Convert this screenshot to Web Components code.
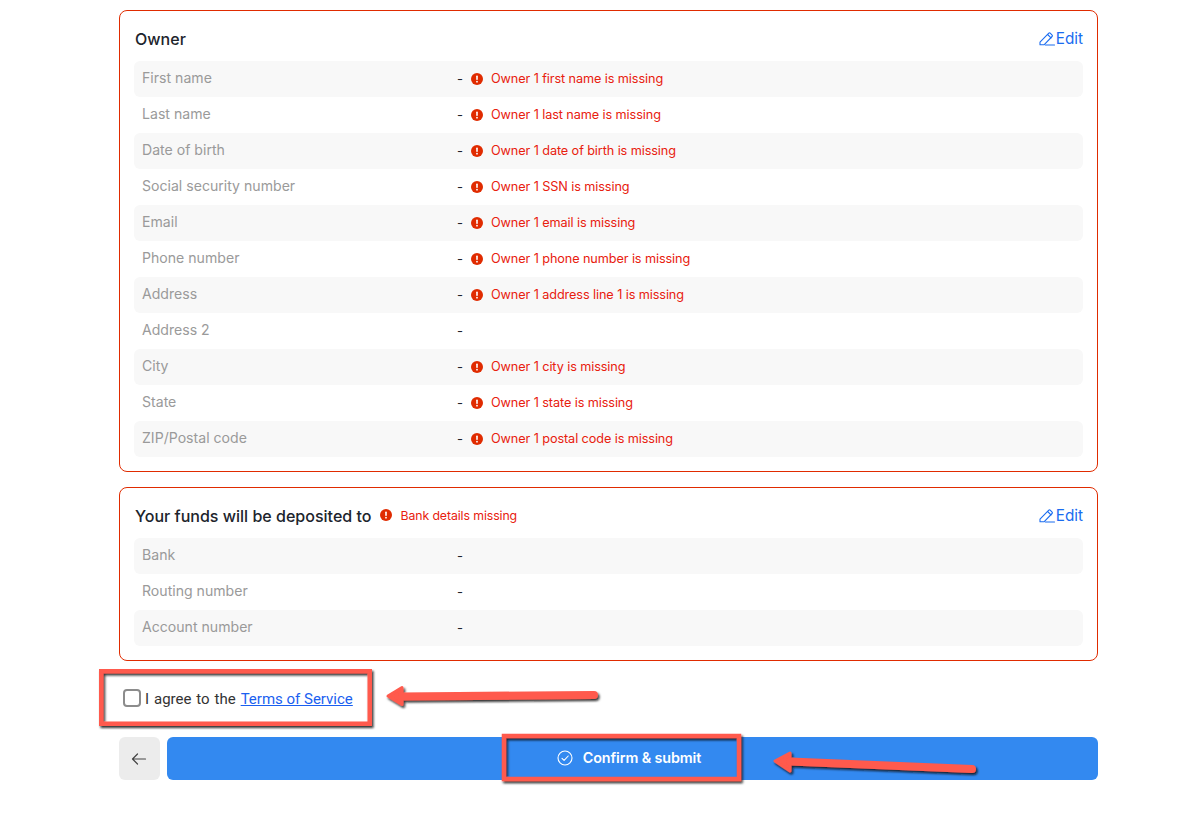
<!DOCTYPE html>
<html lang="en">
<head>
<meta charset="utf-8">
<title>Review</title>
<style>
  html, body { margin: 0; background: #fff; }
</style>
</head>
<body>
<review-page>
  <review-card title="Owner">
    <review-row label="First name" error="Owner 1 first name is missing"></review-row>
    <review-row label="Last name" error="Owner 1 last name is missing"></review-row>
    <review-row label="Date of birth" error="Owner 1 date of birth is missing"></review-row>
    <review-row label="Social security number" error="Owner 1 SSN is missing"></review-row>
    <review-row label="Email" error="Owner 1 email is missing"></review-row>
    <review-row label="Phone number" error="Owner 1 phone number is missing"></review-row>
    <review-row label="Address" error="Owner 1 address line 1 is missing"></review-row>
    <review-row label="Address 2"></review-row>
    <review-row label="City" error="Owner 1 city is missing"></review-row>
    <review-row label="State" error="Owner 1 state is missing"></review-row>
    <review-row label="ZIP/Postal code" error="Owner 1 postal code is missing"></review-row>
  </review-card>
  <review-card title="Your funds will be deposited to" error="Bank details missing">
    <review-row label="Bank"></review-row>
    <review-row label="Routing number"></review-row>
    <review-row label="Account number"></review-row>
  </review-card>
  <agree-row></agree-row>
  <action-bar></action-bar>
  <callout-layer></callout-layer>
</review-page>

<script>
const FONT = '"Inter", "Noto Sans", sans-serif';

class ReviewPage extends HTMLElement {
  constructor() {
    super();
    this.attachShadow({ mode: 'open' });
    this.shadowRoot.innerHTML = `
      <style>
        :host {
          display: flex;
          flex-direction: column;
          position: relative;
          width: 979px;
          height: 820px;
          padding: 10px 89px 0 119px;
          font-family: ${FONT};
        }
      </style>
      <slot></slot>
    `;
  }
}

class ErrorNote extends HTMLElement {
  constructor() {
    super();
    this.attachShadow({ mode: 'open' });
    this.shadowRoot.innerHTML = `
      <style>
        :host {
          display: inline-flex;
          align-items: center;
          gap: 8px;
          color: #e8200e;
          font-size: 12.7px;
          font-weight: 400;
          letter-spacing: -0.1px;
        }
        svg { width: 12px; height: 12px; flex: none; }
      </style>
      <svg viewBox="0 0 12 12">
        <circle cx="6" cy="6" r="6" fill="#e02b00"/>
        <rect x="5.2" y="2.6" width="1.6" height="4.4" rx=".7" fill="#fff"/>
        <circle cx="6" cy="8.7" r=".9" fill="#fff"/>
      </svg>
      <span><slot></slot></span>
    `;
  }
}

class EditLink extends HTMLElement {
  constructor() {
    super();
    this.attachShadow({ mode: 'open' });
    this.shadowRoot.innerHTML = `
      <style>
        :host {
          display: inline-flex;
          align-items: center;
          gap: 1px;
          color: #1a6cf0;
          font-size: 15.3px;
          position: relative;
          top: -1px;
        }
        svg { width: 16px; height: 16px; flex: none; }
      </style>
      <svg viewBox="0 0 16 16" fill="none" stroke="#1a6cf0" stroke-width="1.1" stroke-linejoin="round" stroke-linecap="round">
        <path d="M1 12.200 9.800 3.200a1 1 0 0 1 1.400 0l1.900 1.900a1 1 0 0 1 0 1.400L5 14.800H1z"/>
        <path d="M8.600 4.500l3.400 3.400"/>
        <path d="M6.500 15h9"/>
      </svg>
      <span>Edit</span>
    `;
  }
}

class ReviewCard extends HTMLElement {
  constructor() {
    super();
    this.attachShadow({ mode: 'open' });
    const title = this.getAttribute('title');
    const error = this.getAttribute('error');
    this.shadowRoot.innerHTML = `
      <style>
        :host {
          display: block;
          box-sizing: border-box;
          border: 1px solid #e02b00;
          border-radius: 8px;
          padding: 0 14px 14px;
          margin-bottom: 15px;
          background: #fff;
        }
        header {
          display: flex;
          align-items: center;
          height: 50px;
          padding-top: 6px;
          box-sizing: border-box;
        }
        h2 {
          margin: 0 0 0 1px;
          font-size: 16.05px;
          font-weight: 500;
          color: #20242c;
        }
        error-note { margin-left: 8px; font-size: 12.3px; gap: 9px; position: relative; top: -1px; }
        edit-link { margin-left: auto; }
        .rows { display: flex; flex-direction: column; }
      </style>
      <header>
        <h2>${title}</h2>
        ${error ? `<error-note>${error}</error-note>` : ''}
        <edit-link></edit-link>
      </header>
      <div class="rows"><slot></slot></div>
    `;
  }
}

class ReviewRow extends HTMLElement {
  constructor() {
    super();
    this.attachShadow({ mode: 'open' });
    const error = this.getAttribute('error');
    this.shadowRoot.innerHTML = `
      <style>
        :host {
          display: grid;
          grid-template-columns: 315px 1fr;
          align-items: center;
          box-sizing: border-box;
          height: 36px;
          padding: 0 7px 0 8px;
          border-radius: 6px;
          font-size: 14.1px;
        }
        :host(:nth-child(odd)) { background: #f8f8f8; }
        .label { color: #9a9a9a; padding-bottom: 3px; }
        .value { display: flex; align-items: center; gap: 8px; color: #20242c; font-size: 13px; padding-bottom: 1px; }
      </style>
      <div class="label">${this.getAttribute('label')}</div>
      <div class="value"><span>-</span>${error ? `<error-note>${error}</error-note>` : ''}</div>
    `;
  }
}

class AgreeRow extends HTMLElement {
  constructor() {
    super();
    this.attachShadow({ mode: 'open' });
    this.shadowRoot.innerHTML = `
      <style>
        :host {
          display: flex;
          align-items: center;
          gap: 4px;
          height: 44px;
          margin-bottom: 17px;
          padding-left: 4px;
          font-family: Roboto, sans-serif;
          font-size: 15px;
          color: #333;
        }
        .box {
          box-sizing: border-box;
          width: 18px;
          height: 18px;
          border: 2px solid #8c8c8c;
          border-radius: 4px;
          background: #fff;
          flex: none;
        }
        .text { padding-top: 2px; }
        .lead { word-spacing: 1.2px; }
        a { color: #1a5ff0; text-decoration: underline; }
      </style>
      <span class="box"></span>
      <span class="text"><span class="lead">I agree to the </span><a href="#">Terms of Service</a></span>
    `;
  }
}

class ActionBar extends HTMLElement {
  constructor() {
    super();
    this.attachShadow({ mode: 'open' });
    this.shadowRoot.innerHTML = `
      <style>
        :host { display: flex; gap: 7px; height: 43px; }
        button {
          border: 0;
          border-radius: 6px;
          font: inherit;
          padding: 0;
          display: flex;
          align-items: center;
          justify-content: center;
        }
        .back { width: 41px; background: #ececec; padding-right: 2px; }
        .submit {
          flex: 1;
          gap: 10px;
          padding: 0 7px 2px 0;
          background: #3389f0;
          color: #fff;
          font-size: 14.3px;
          font-weight: 600;
          letter-spacing: -0.1px;
        }
        svg { display: block; }
      </style>
      <button class="back" aria-label="Back">
        <svg width="16" height="16" viewBox="0 0 16 16" fill="none" stroke="#444" stroke-width="1.2" stroke-linecap="round" stroke-linejoin="round">
          <path d="M14.500 8H1.800M6.500 3 1.500 8l5 5"/>
        </svg>
      </button>
      <button class="submit">
        <svg width="16" height="16" viewBox="0 0 16 16" fill="none" stroke="#fff" stroke-width="1.1" stroke-linecap="round" stroke-linejoin="round">
          <circle cx="8" cy="8" r="7"/>
          <path d="M5 8.300l2.100 2.100L11.200 6"/>
        </svg>
        <span>Confirm &amp; submit</span>
      </button>
    `;
  }
}

// Red annotation marks drawn over the page
class CalloutLayer extends HTMLElement {
  constructor() {
    super();
    this.attachShadow({ mode: 'open' });
    this.shadowRoot.innerHTML = `
      <style>
        :host { position: absolute; left: 0; top: 0; width: 1187px; height: 830px; pointer-events: none; }
        svg { display: block; }
      </style>
      <svg width="1187" height="830" viewBox="0 0 1187 830">
        <defs>
          <filter id="sh" x="-10%" y="-60%" width="120%" height="220%">
            <feDropShadow dx="1.5" dy="2" stdDeviation="1.2" flood-color="#111" flood-opacity=".85"/>
          </filter>
        </defs>
        <g filter="url(#sh)" fill="none" stroke="#ff5a4d" stroke-width="4.5">
          <rect x="101.250" y="671.250" width="268.500" height="52.500"/>
          <rect x="504" y="736" width="235" height="43"/>
        </g>
        <g filter="url(#sh)" fill="#ff5a4d" stroke="#ff5a4d" stroke-linejoin="round" stroke-linecap="round">
          <path d="M388 696 L402 687.500 V704.500 Z" stroke-width="3"/>
          <path d="M402 696.500 L594 695" stroke-width="8" fill="none"/>
          <path d="M775 761 L790 753 V771 Z" stroke-width="3"/>
          <path d="M790 761.500 L972 769" stroke-width="8" fill="none"/>
        </g>
      </svg>
    `;
  }
}

customElements.define('review-page', ReviewPage);
customElements.define('error-note', ErrorNote);
customElements.define('edit-link', EditLink);
customElements.define('review-card', ReviewCard);
customElements.define('review-row', ReviewRow);
customElements.define('agree-row', AgreeRow);
customElements.define('action-bar', ActionBar);
customElements.define('callout-layer', CalloutLayer);
</script>
</body>
</html>
